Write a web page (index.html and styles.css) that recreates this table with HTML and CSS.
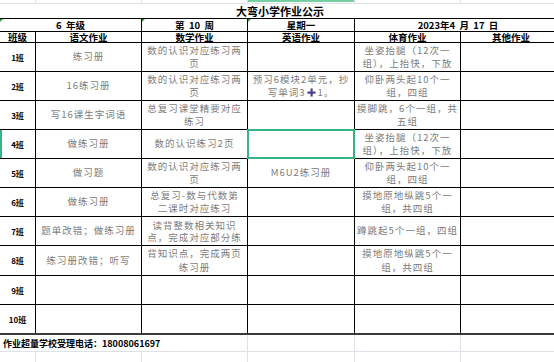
FILE: index.html
```html
<!DOCTYPE html>
<html lang="zh-CN">
<head>
<meta charset="utf-8">
<title>大弯小学作业公示</title>
<link rel="stylesheet" href="styles.css">
</head>
<body>
<div class="sheet">
  <div class="cols strip">
    <div></div><div></div><div></div><div class="sel"></div><div></div><div></div>
  </div>
  <div class="title">大弯小学作业公示</div>
  <div class="cols table">
    <div class="hd s2 mark"><span>6&nbsp;&nbsp;年级</span></div>
    <div class="hd mark"><span>第&nbsp;&nbsp;10&nbsp;&nbsp;周</span></div>
    <div class="hd mark"><span>星期一</span></div>
    <div class="hd s2"><span>2023年4&nbsp;&nbsp;月&nbsp;&nbsp;17&nbsp;&nbsp;日</span></div>

    <div class="hd"><span>班级</span></div>
    <div class="hd"><span>语文作业</span></div>
    <div class="hd"><span>数学作业</span></div>
    <div class="hd"><span>英语作业</span></div>
    <div class="hd"><span>体育作业</span></div>
    <div class="hd"><span>其他作业</span></div>

    <div class="lb"><span>1班</span></div>
    <div class="d"><span>练习册</span></div>
    <div class="d"><span>数的认识对应练习两<br>页</span></div>
    <div class="d"></div>
    <div class="d"><span>坐姿抬腿（12次一<br>组），上抬快，下放</span></div>
    <div class="d"></div>

    <div class="lb"><span>2班</span></div>
    <div class="d"><span>16练习册</span></div>
    <div class="d"><span>数的认识对应练习两<br>页</span></div>
    <div class="d"><span>预习6模块2单元，抄<br>写单词3<svg class="plus" viewBox="0 0 10 10" width="9" height="9"><rect x="3.9" y="0.5" width="2.4" height="9" fill="#4a3f8c"/><rect x="0.5" y="3.9" width="9" height="2.4" fill="#4a3f8c"/></svg>1。</span></div>
    <div class="d"><span>仰卧两头起10个一<br>组，四组</span></div>
    <div class="d"></div>

    <div class="lb"><span>3班</span></div>
    <div class="d"><span>写16课生字词语</span></div>
    <div class="d"><span>总复习课堂精要对应<br>练习</span></div>
    <div class="d"></div>
    <div class="d"><span>摸脚跳，6个一组，共<br>五组</span></div>
    <div class="d"></div>

    <div class="lb rowsel"><span>4班</span></div>
    <div class="d"><span>做练习册</span></div>
    <div class="d"><span>数的认识练习2页</span></div>
    <div class="d selcell"></div>
    <div class="d"><span>坐姿抬腿（12次一<br>组），上抬快，下放</span></div>
    <div class="d"></div>

    <div class="lb"><span>5班</span></div>
    <div class="d"><span>做习题</span></div>
    <div class="d"><span>数的认识对应练习两<br>页</span></div>
    <div class="d"><span>M6U2练习册</span></div>
    <div class="d"><span>仰卧两头起10个一<br>组，四组</span></div>
    <div class="d"></div>

    <div class="lb"><span>6班</span></div>
    <div class="d"><span>做练习册</span></div>
    <div class="d"><span>总复习-数与代数第<br>二课时对应练习</span></div>
    <div class="d"></div>
    <div class="d"><span>摸地原地纵跳5个一<br>组，共四组</span></div>
    <div class="d"></div>

    <div class="lb"><span>7班</span></div>
    <div class="d"><span>题单改错；做练习册</span></div>
    <div class="d tight"><span>读背整数相关知识<br>点，完成对应部分练</span></div>
    <div class="d"></div>
    <div class="d"><span>蹲跳起5个一组，四组</span></div>
    <div class="d"></div>

    <div class="lb"><span>8班</span></div>
    <div class="d"><span>练习册改错；听写</span></div>
    <div class="d"><span>背知识点，完成两页<br>练习册</span></div>
    <div class="d"></div>
    <div class="d"><span>摸地原地纵跳5个一<br>组，共四组</span></div>
    <div class="d"></div>

    <div class="lb"><span>9班</span></div>
    <div class="d"></div><div class="d"></div><div class="d"></div><div class="d"></div><div class="d"></div>

    <div class="lb"><span>10班</span></div>
    <div class="d"></div><div class="d"></div><div class="d"></div><div class="d"></div><div class="d"></div>
  </div>
  <div class="cols foot">
    <div class="ft">作业超量学校受理电话：18008061697</div>
    <div></div><div></div><div></div>
  </div>
  <div class="cols blank">
    <div></div><div></div><div></div><div></div><div></div><div></div>
  </div>
</div>
</body>
</html>
```

FILE: styles.css
```css
* { box-sizing: border-box; margin: 0; padding: 0; }
html, body { background: #fff; }
body {
  width: 554px;
  height: 362px;
  overflow: hidden;
  font-family: "Noto Sans CJK SC", "Noto Sans", sans-serif;
  color: #000;
}
.sheet { width: 560px; }
.cols {
  display: grid;
  grid-template-columns: 35px 105px 105px 106px 105px 100px;
  column-gap: 1px;
}
.strip {
  height: 4px;
  background: #dde1e8;
  border-bottom: 1px solid #dde1e8;
}
.strip > div { background: #fff; }
.strip .sel { background: linear-gradient(#76cfa0 0 2px, #fff 2px); }

.title {
  height: 14px;
  line-height: 14px;
  text-align: center;
  font-weight: 700;
  font-size: 11px;
}

.table {
  background: #000;
  row-gap: 1px;
  padding-top: 1px;
  border-bottom: 2px solid #3a3a3a;
  grid-template-rows: 12px 10px repeat(7, 28px) 29px 28px 28px;
}
.table > div {
  background: #fff;
  display: flex;
  align-items: center;
  justify-content: center;
  text-align: center;
  overflow: hidden;
  position: relative;
}
.s2 { grid-column: span 2; }
.table > .hd {
  font-size: 9.5px;
  font-weight: 700;
  line-height: 10px;
  white-space: nowrap;
  overflow: visible;
}
.lb {
  font-size: 8px;
  font-weight: 700;
}
.d {
  color: #7c7c7c;
  font-size: 9.5px;
  letter-spacing: 1px;
  line-height: 13.5px;
  padding: 0 2px;
}
.d.tight { line-height: 12px; }
.plus { vertical-align: -1px; margin: 0 1px 0 2px; }

.mark::before {
  content: "";
  position: absolute;
  left: 0;
  top: 0;
  border-top: 3px solid #2e9a3e;
  border-right: 3px solid transparent;
}
.table > .selcell { overflow: visible; }
.selcell::after {
  content: "";
  position: absolute;
  left: -1px; top: -1px; right: -1px; bottom: -1px;
  border: 2px solid #34b583;
  z-index: 2;
}
.rowsel::before {
  content: "";
  position: absolute;
  left: 0; top: -1px; bottom: -1px;
  width: 2px;
  background: #34b583;
}

.foot {
  height: 17px;
  background: #dde1e8;
  border-bottom: 1px solid #dde1e8;
}
.foot > div { background: #fff; }
.foot .ft {
  grid-column: span 3;
  font-size: 9px;
  font-weight: 700;
  padding-left: 3px;
  display: flex;
  align-items: center;
  white-space: nowrap;
}
.blank {
  height: 12px;
  background: #dde1e8;
}
.blank > div { background: #fff; }
```
